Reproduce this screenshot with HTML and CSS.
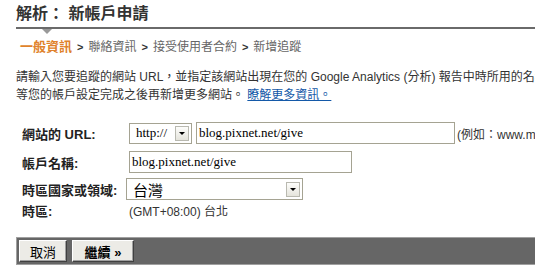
FILE: index.html
```html
<!DOCTYPE html>
<html lang="zh-Hant">
<head>
<meta charset="utf-8">
<title>解析： 新帳戶申請</title>
<link rel="stylesheet" href="styles.css">
</head>
<body>
<div class="page">
  <h1 class="title">解析： 新帳戶申請</h1>
  <div class="rule"><span class="caret"></span></div>
  <div class="steps">
    <span class="step active">一般資訊</span>
    <span class="sep">&gt;</span>
    <span class="step">聯絡資訊</span>
    <span class="sep">&gt;</span>
    <span class="step">接受使用者合約</span>
    <span class="sep">&gt;</span>
    <span class="step">新增追蹤</span>
  </div>
  <p class="intro">請輸入您要追蹤的網站 URL，並指定該網站出現在您的 Google Analytics (分析) 報告中時所用的名稱。<br>等您的帳戶設定完成之後再新增更多網站。 <a class="more" href="#">瞭解更多資訊。</a></p>

  <div class="form">
    <div class="row r1">
      <div class="label">網站的 URL:</div>
      <div class="controls">
        <div class="select proto"><span class="val">http://</span><span class="btn"><span class="tri"></span></span></div>
        <div class="input url">blog.pixnet.net/give</div>
        <span class="example">(例如：www.mysite.com)</span>
      </div>
    </div>
    <div class="row r2">
      <div class="label">帳戶名稱:</div>
      <div class="controls">
        <div class="input name">blog.pixnet.net/give</div>
      </div>
    </div>
    <div class="row r3">
      <div class="label">時區國家或領域:</div>
      <div class="controls">
        <div class="select country"><span class="val cjk">台灣</span><span class="btn"><span class="tri"></span></span></div>
      </div>
    </div>
    <div class="row r4">
      <div class="label">時區:</div>
      <div class="controls"><span class="tz">(GMT+08:00) 台北</span></div>
    </div>
  </div>

  <div class="bar">
    <button class="button" type="button">取消</button>
    <button class="button primary" type="button">繼續 »</button>
  </div>
</div>
</body>
</html>
```

FILE: styles.css
```css
html, body {
  margin: 0;
  padding: 0;
  overflow: hidden;
  background: #fff;
}
body {
  font-family: "Liberation Sans", "Noto Sans CJK TC", sans-serif;
  font-size: 12px;
  color: #333;
}
.page {
  padding-left: 16px;
  width: 519px;
}
.title {
  margin: 0;
  padding-top: 3px;
  font-size: 16px;
  line-height: 22px;
  font-weight: bold;
  color: #333;
}
.rule {
  position: relative;
  margin-top: 2px;
  border-top: 2px solid #6a6a6a;
}
.caret {
  position: absolute;
  left: 26px;
  top: 0;
  width: 0;
  height: 0;
  border-left: 5px solid transparent;
  border-right: 5px solid transparent;
  border-top: 5px solid #999;
}
.steps {
  margin-top: 10px;
  padding-left: 4px;
  line-height: 16px;
  white-space: nowrap;
  display: flex;
  align-items: baseline;
  gap: 4px;
  font-size: 12px;
}
.step { color: #666; }
.step.active { color: #e0822c; font-weight: bold; font-size: 13px; }
.sep { color: #333; font-size: 11px; font-weight: bold; padding: 0 1px; }
.intro {
  margin: 13px 0 0;
  font-size: 12px;
  line-height: 18px;
  white-space: nowrap;
  color: #333;
}
.more {
  color: #1459a8;
  text-decoration: underline;
}
.form {
  margin-top: 18px;
  padding-left: 6px;
}
.row {
  display: flex;
  align-items: center;
}
.r1 { height: 22px; margin-bottom: 7px; }
.r2 { height: 22px; margin-bottom: 5px; }
.r3 { height: 22px; margin-bottom: 2px; }
.r4 { height: 16px; }
.label {
  width: 107px;
  flex: none;
  font-weight: bold;
  font-size: 13px;
  color: #222;
}
.controls {
  display: flex;
  align-items: center;
  gap: 4px;
  white-space: nowrap;
}
.select, .input {
  box-sizing: border-box;
  height: 22px;
  border: 1px solid #a5a392;
  background: #fff;
  display: flex;
  align-items: center;
  font-family: "Liberation Serif", "Noto Sans CJK TC", serif;
  font-size: 13px;
  color: #000;
}
.select {
  justify-content: space-between;
  padding: 0 2px 0 6px;
}
.proto { width: 63px; height: 21px; }
.country { width: 177px; margin-left: -3px; padding-left: 6px; }
.val.cjk {
  font-family: "Noto Sans CJK TC", sans-serif;
  font-size: 15px;
}
.btn {
  box-sizing: border-box;
  width: 14px;
  height: 15px;
  border: 1px solid #b9b9b0;
  background: linear-gradient(#fdfdfb, #e5e4dc);
  display: flex;
  align-items: center;
  justify-content: center;
}
.tri {
  width: 0;
  height: 0;
  border-left: 3px solid transparent;
  border-right: 3px solid transparent;
  border-top: 3px solid #000;
}
.input { padding-left: 2px; }
.url { width: 259px; }
.name { width: 223px; }
.example { color: #333; margin-left: -2px; font-size: 12px; }
.tz { color: #333; font-size: 12px; }
.bar {
  margin-top: 19px;
  box-sizing: border-box;
  height: 28px;
  border: 1px solid #a0a0a0;
  border-right: none;
  background: #666;
  display: flex;
  align-items: center;
  gap: 5px;
  padding-left: 2px;
  margin-right: -16px;
}
.button {
  box-sizing: border-box;
  height: 22px;
  padding: 0 8px;
  border: 1px solid;
  border-color: #fff #404040 #404040 #fff;
  background: #ecebe6;
  font-family: "Liberation Sans", "Noto Sans CJK TC", sans-serif;
  font-size: 13px;
  color: #000;
  box-shadow: inset -1px -1px 0 #a0a0a0;
}
.button { width: 48px; }
.button.primary { width: 62px; font-weight: bold; }
```
